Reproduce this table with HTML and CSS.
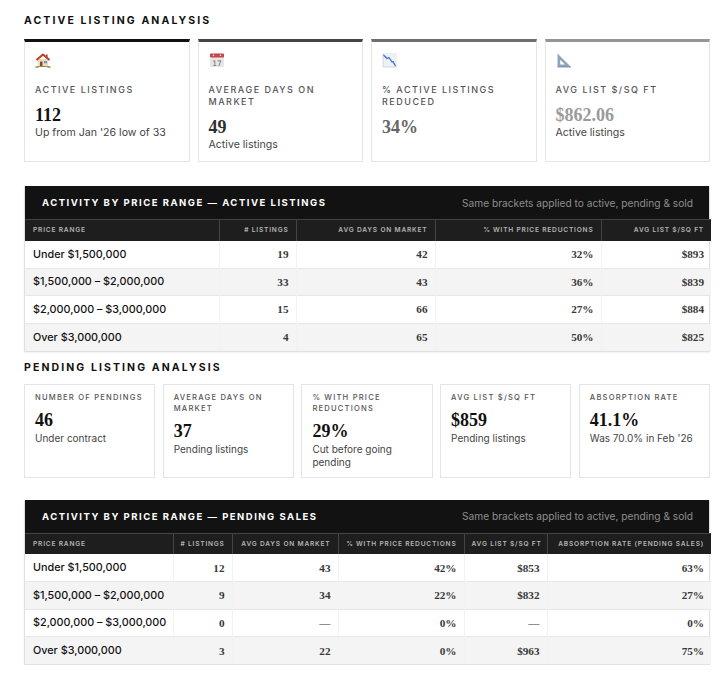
FILE: index.html
```html
<!DOCTYPE html>
<html lang="en">
<head>
<meta charset="utf-8">
<title>Listing Analysis</title>
<link rel="stylesheet" href="styles.css">
</head>
<body>
<main class="page">
  <h2 class="section-title">Active Listing Analysis</h2>
  <div class="stat-grid four">
    <div class="stat-card accent a1">
      <div class="icon">
        <svg width="16" height="16" viewBox="0 0 16 16">
          <rect x="3" y="7" width="10" height="7" fill="#f2dcb3"/>
          <path d="M1.5 8 L8 2.5 L14.5 8" fill="none" stroke="#c0392b" stroke-width="2" stroke-linejoin="round"/>
          <rect x="11" y="2.5" width="1.6" height="3" fill="#a0522d"/>
          <rect x="5" y="9.5" width="2.5" height="4.5" fill="#8b4a2b"/>
          <rect x="9" y="9" width="3" height="2.3" fill="#5b9bd5"/>
          <path d="M0.5 15 h3 M12.5 15 h3" stroke="#5aa64a" stroke-width="1.4"/>
          <rect x="2.5" y="14" width="11" height="1" fill="#9c8a6a"/>
        </svg>
      </div>
      <div class="label">Active Listings</div>
      <div class="value v1">112</div>
      <div class="sub">Up from Jan '26 low of 33</div>
    </div>
    <div class="stat-card accent a2">
      <div class="icon">
        <svg width="16" height="16" viewBox="0 0 16 16">
          <rect x="1" y="1.5" width="14" height="13.5" rx="1" fill="#e6e6e6"/>
          <rect x="1" y="1.5" width="14" height="4" rx="1" fill="#c8454a"/>
          <circle cx="4.5" cy="3.2" r="0.7" fill="#fff"/>
          <circle cx="11.5" cy="3.2" r="0.7" fill="#fff"/>
          <text x="8" y="13.6" text-anchor="middle" font-family="DejaVu Sans, sans-serif" font-size="7.5" fill="#666">17</text>
        </svg>
      </div>
      <div class="label">Average Days on Market</div>
      <div class="value v2">49</div>
      <div class="sub">Active listings</div>
    </div>
    <div class="stat-card accent a3">
      <div class="icon">
        <svg width="16" height="16" viewBox="0 0 16 16">
          <rect x="1" y="1" width="14" height="14" fill="#eef0f3"/>
          <path d="M1 1 V15 H15" fill="none" stroke="#d3d7dd" stroke-width="1"/>
          <path d="M1.5 3 L5 6.5 L7 5.5 L10 10 L11 9.5 L13.5 14" fill="none" stroke="#3d6fd1" stroke-width="1.3" stroke-linejoin="round"/>
        </svg>
      </div>
      <div class="label">% Active Listings Reduced</div>
      <div class="value v3">34%</div>
    </div>
    <div class="stat-card accent a4">
      <div class="icon">
        <svg width="16" height="16" viewBox="0 0 16 16">
          <path d="M1.5 1.5 L15 15 H1.5 Z" fill="#8fa3bf"/>
          <path d="M4.2 7.8 L9 12.6 H4.2 Z" fill="#fff"/>
          <path d="M1.5 15 H15" stroke="#6f839f" stroke-width="0.8"/>
        </svg>
      </div>
      <div class="label">Avg List $/Sq Ft</div>
      <div class="value v4">$862.06</div>
      <div class="sub">Active listings</div>
    </div>
  </div>

  <section class="data-table">
    <div class="table-head">
      <h3 class="table-title">Activity by Price Range — Active Listings</h3>
      <span class="table-note">Same brackets applied to active, pending &amp; sold</span>
    </div>
    <table>
      <colgroup>
        <col style="width:194px"><col style="width:77px"><col style="width:139px"><col style="width:166px"><col style="width:110px">
      </colgroup>
      <thead>
        <tr><th class="left">Price Range</th><th># Listings</th><th>Avg Days on Market</th><th>% With Price Reductions</th><th>Avg List $/Sq Ft</th></tr>
      </thead>
      <tbody>
        <tr><td class="left">Under $1,500,000</td><td>19</td><td>42</td><td>32%</td><td>$893</td></tr>
        <tr><td class="left">$1,500,000 – $2,000,000</td><td>33</td><td>43</td><td>36%</td><td>$839</td></tr>
        <tr><td class="left">$2,000,000 – $3,000,000</td><td>15</td><td>66</td><td>27%</td><td>$884</td></tr>
        <tr><td class="left">Over $3,000,000</td><td>4</td><td>65</td><td>50%</td><td>$825</td></tr>
      </tbody>
    </table>
  </section>

  <h2 class="section-title second">Pending Listing Analysis</h2>
  <div class="stat-grid five">
    <div class="stat-card small">
      <div class="label">Number of Pendings</div>
      <div class="value">46</div>
      <div class="sub">Under contract</div>
    </div>
    <div class="stat-card small">
      <div class="label">Average Days on Market</div>
      <div class="value">37</div>
      <div class="sub">Pending listings</div>
    </div>
    <div class="stat-card small">
      <div class="label">% With Price Reductions</div>
      <div class="value">29%</div>
      <div class="sub">Cut before going pending</div>
    </div>
    <div class="stat-card small">
      <div class="label">Avg List $/Sq Ft</div>
      <div class="value">$859</div>
      <div class="sub">Pending listings</div>
    </div>
    <div class="stat-card small">
      <div class="label">Absorption Rate</div>
      <div class="value">41.1%</div>
      <div class="sub">Was 70.0% in Feb '26</div>
    </div>
  </div>

  <section class="data-table second">
    <div class="table-head">
      <h3 class="table-title">Activity by Price Range — Pending Sales</h3>
      <span class="table-note">Same brackets applied to active, pending &amp; sold</span>
    </div>
    <table>
      <colgroup>
        <col style="width:148px"><col style="width:59px"><col style="width:106px"><col style="width:126px"><col style="width:83px"><col style="width:164px">
      </colgroup>
      <thead>
        <tr><th class="left">Price Range</th><th># Listings</th><th>Avg Days on Market</th><th>% With Price Reductions</th><th>Avg List $/Sq Ft</th><th>Absorption Rate (Pending Sales)</th></tr>
      </thead>
      <tbody>
        <tr><td class="left">Under $1,500,000</td><td>12</td><td>43</td><td>42%</td><td>$853</td><td>63%</td></tr>
        <tr><td class="left">$1,500,000 – $2,000,000</td><td>9</td><td>34</td><td>22%</td><td>$832</td><td>27%</td></tr>
        <tr><td class="left">$2,000,000 – $3,000,000</td><td>0</td><td>—</td><td>0%</td><td>—</td><td>0%</td></tr>
        <tr><td class="left">Over $3,000,000</td><td>3</td><td>22</td><td>0%</td><td>$963</td><td>75%</td></tr>
      </tbody>
    </table>
  </section>
</main>
</body>
</html>
```

FILE: styles.css
```css
* { box-sizing: border-box; }
html, body { margin: 0; padding: 0; background: #fff; }
body {
  font-family: "Inter", "Open Sans", sans-serif;
  color: #222;
}
.page {
  width: 686px;
  margin-left: 24px;
  padding-top: 14px;
}
.section-title {
  margin: 0 0 11px;
  font-size: 10.5px;
  line-height: 14px;
  font-weight: 700;
  letter-spacing: 2.1px;
  text-transform: uppercase;
  color: #111;
}
.section-title.second { margin-top: 9px; margin-bottom: 9px; }

.stat-grid { display: grid; gap: 8px; }
.stat-grid.four { grid-template-columns: repeat(4, 1fr); }
.stat-grid.five { grid-template-columns: repeat(5, 1fr); gap: 7.5px; }

.stat-card {
  border: 1px solid #e4e4e4;
  background: #fff;
  padding: 10px 10px 9px;
}
.stat-card.accent { border-top: 3px solid #111; }
.stat-card.a2 { border-top-color: #444; }
.stat-card.a3 { border-top-color: #6f6f6f; }
.stat-card.a4 { border-top-color: #969696; }
.icon { height: 16px; margin-bottom: 16px; }
.icon svg { display: block; }

.label {
  font-size: 9px;
  line-height: 12px;
  letter-spacing: 1.5px;
  text-transform: uppercase;
  color: #555;
  font-weight: 500;
}
.value {
  font-family: "Liberation Serif", "DejaVu Serif", serif;
  font-weight: 700;
  font-size: 18px;
  line-height: 22px;
  margin-top: 8px;
  color: #111;
}
.value.v2 { color: #2e2e2e; }
.value.v3 { color: #666; }
.value.v4 { color: #9a9a9a; }
.sub {
  font-size: 10.6px;
  line-height: 14px;
  color: #444;
}

.stat-card.small { padding: 7px 10px 8px; }
.stat-card.small .label { font-size: 7.6px; line-height: 11px; letter-spacing: 1.2px; }
.stat-card.small .value { font-size: 18px; line-height: 22px; margin-top: 6px; }
.stat-card.small .sub { font-size: 10px; line-height: 13px; margin-top: 1px; }

.data-table {
  margin-top: 24px;
  border: 1px solid #e0e0e0;
  border-top: none;
  box-shadow: 0 1px 2px rgba(0,0,0,0.06);
}
.data-table.second { margin-top: 22px; }
.table-head {
  background: #121212;
  height: 33px;
  display: flex;
  align-items: center;
  justify-content: space-between;
  padding: 0 16px 0 17px;
}
.table-title {
  margin: 0;
  color: #fff;
  font-size: 9.5px;
  font-weight: 700;
  letter-spacing: 1.5px;
  text-transform: uppercase;
}
.table-note {
  color: #8e8e8e;
  font-size: 10.2px;
}
table {
  width: 100%;
  border-collapse: collapse;
  table-layout: fixed;
}
th {
  background: #1e1e1e;
  color: #b5b5b5;
  font-size: 6.6px;
  font-weight: 600;
  letter-spacing: 0.8px;
  text-transform: uppercase;
  text-align: right;
  height: 21px;
  padding: 0 7px;
  border-top: 1px solid #444;
  border-left: 1px solid #444;
  white-space: nowrap;
}
th:first-child { border-left: none; }
th.left, td.left { text-align: left; padding-left: 8px; }
td {
  height: 27.5px;
  padding: 0 7px;
  text-align: right;
  font-family: "Liberation Serif", "DejaVu Serif", serif;
  font-weight: 700;
  font-size: 11.2px;
  color: #383838;
  border-top: 1px solid #e8e8e8;
  border-left: 1px solid #f2f2f2;
  white-space: nowrap;
}
td:first-child { border-left: none; }
td.left {
  font-family: "Inter", "Open Sans", sans-serif;
  font-weight: 500;
  font-size: 10.8px;
  color: #111;
}
tbody tr:nth-child(even) td { background: #f4f4f4; }
tbody tr:first-child td { border-top: none; }
```
